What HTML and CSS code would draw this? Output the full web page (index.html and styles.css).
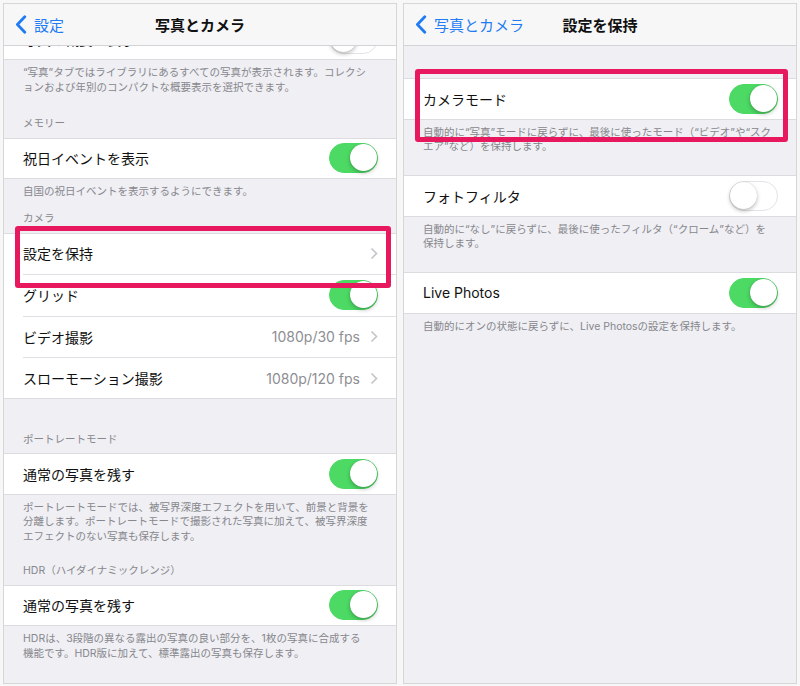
FILE: index.html
```html
<!DOCTYPE html>
<html lang="ja">
<head>
    <meta charset="UTF-8">
    <meta name="viewport" content="width=device-width, initial-scale=1.0">
    <title>写真とカメラ / 設定を保持</title>
    <link rel="stylesheet" href="styles.css">
</head>
<body>
<div class="page">

    <!-- left screen -->
    <div class="phone">
        <div class="navbar">
            <div class="back">
                <svg class="back_icon" viewBox="0 0 12 19" width="12" height="19"><path d="M9.8 1.8 L2.4 9.5 L9.8 17.2"/></svg>
                <span>設定</span>
            </div>
            <div class="title">写真とカメラ</div>
            <div></div>
        </div>
        <div class="content">
            <div class="list list_scrolled">
                <div class="group">
                    <div class="row">
                        <span class="label">写真の概要を表示</span>
                        <span class="toggle"></span>
                    </div>
                </div>
                <div class="foot">“写真”タブではライブラリにあるすべての写真が表示されます。コレクシ<br>ョンおよび年別のコンパクトな概要表示を選択できます。</div>

                <div class="head head_memory">メモリー</div>
                <div class="group">
                    <div class="row">
                        <span class="label">祝日イベントを表示</span>
                        <span class="toggle on"></span>
                    </div>
                </div>
                <div class="foot">自国の祝日イベントを表示するようにできます。</div>

                <div class="head head_camera">カメラ</div>
                <div class="group">
                    <div class="row">
                        <span class="label">設定を保持</span>
                        <svg class="chev" viewBox="0 0 8 13" width="8" height="13"><path d="M1.5 1.5 L6.5 6.5 L1.5 11.5"/></svg>
                    </div>
                    <div class="row">
                        <span class="label">グリッド</span>
                        <span class="toggle on"></span>
                    </div>
                    <div class="row">
                        <span class="label">ビデオ撮影</span>
                        <span class="value">1080p/30 fps</span>
                        <svg class="chev" viewBox="0 0 8 13" width="8" height="13"><path d="M1.5 1.5 L6.5 6.5 L1.5 11.5"/></svg>
                    </div>
                    <div class="row">
                        <span class="label">スローモーション撮影</span>
                        <span class="value">1080p/120 fps</span>
                        <svg class="chev" viewBox="0 0 8 13" width="8" height="13"><path d="M1.5 1.5 L6.5 6.5 L1.5 11.5"/></svg>
                    </div>
                </div>

                <div class="head head_portrait">ポートレートモード</div>
                <div class="group">
                    <div class="row">
                        <span class="label">通常の写真を残す</span>
                        <span class="toggle on"></span>
                    </div>
                </div>
                <div class="foot">ポートレートモードでは、被写界深度エフェクトを用いて、前景と背景を<br>分離します。ポートレートモードで撮影された写真に加えて、被写界深度<br>エフェクトのない写真も保存します。</div>

                <div class="head head_hdr">HDR（ハイダイナミックレンジ）</div>
                <div class="group">
                    <div class="row">
                        <span class="label">通常の写真を残す</span>
                        <span class="toggle on"></span>
                    </div>
                </div>
                <div class="foot">HDRは、3段階の異なる露出の写真の良い部分を、1枚の写真に合成する<br>機能です。HDR版に加えて、標準露出の写真も保存します。</div>
            </div>
        </div>
        <div class="mark mark_left"></div>
    </div>

    <!-- right screen -->
    <div class="phone">
        <div class="navbar">
            <div class="back">
                <svg class="back_icon" viewBox="0 0 12 19" width="12" height="19"><path d="M9.8 1.8 L2.4 9.5 L9.8 17.2"/></svg>
                <span>写真とカメラ</span>
            </div>
            <div class="title">設定を保持</div>
            <div></div>
        </div>
        <div class="content">
            <div class="list list_top">
                <div class="group">
                    <div class="row">
                        <span class="label">カメラモード</span>
                        <span class="toggle on"></span>
                    </div>
                </div>
                <div class="foot">自動的に“写真”モードに戻らずに、最後に使ったモード（“ビデオ”や“スク<br>エア”など）を保持します。</div>

                <div class="group">
                    <div class="row">
                        <span class="label">フォトフィルタ</span>
                        <span class="toggle"></span>
                    </div>
                </div>
                <div class="foot">自動的に“なし”に戻らずに、最後に使ったフィルタ（“クローム”など）を<br>保持します。</div>

                <div class="group">
                    <div class="row">
                        <span class="label">Live Photos</span>
                        <span class="toggle on"></span>
                    </div>
                </div>
                <div class="foot">自動的にオンの状態に戻らずに、Live Photosの設定を保持します。</div>
            </div>
        </div>
        <div class="mark mark_right"></div>
    </div>

</div>
</body>
</html>
```

FILE: styles.css
```css
body{
    margin: 0;
    background: #f7f7f7;
    font-family: Inter, "Noto Sans CJK JP", sans-serif;
    color: #111;
}

.page{
    display: flex;
    gap: 6px;
    padding: 3px;
}

.phone{
    position: relative;
    width: 392px;
    height: 679px;
    border: 1px solid #d6d6d9;
    background: #efeff4;
    display: flex;
    flex-direction: column;
    overflow: hidden;
}

/* nav bar */
.navbar{
    flex-shrink: 0;
    height: 41px;
    border-bottom: 1px solid #d3d3d7;
    background: #f7f7f8;
    display: grid;
    grid-template-columns: 1fr auto 1fr;
    align-items: center;
}
.back{
    display: flex;
    align-items: center;
    gap: 7px;
    padding-left: 11px;
    color: #1f7cf2;
    font-size: 15px;
    white-space: nowrap;
}
.back_icon path{
    fill: none;
    stroke: #1f7cf2;
    stroke-width: 2.8;
    stroke-linecap: round;
    stroke-linejoin: round;
}
.title{
    font-size: 15px;
    font-weight: 700;
    color: #111;
}

/* scroll area */
.content{
    flex: 1;
    overflow: hidden;
}
.list_scrolled{
    margin-top: -27.5px;
}
.list_top{
    margin-top: 32px;
}

.group{
    background: #fff;
    box-shadow: inset 0 1px #dcdce0, inset 0 -1px #dcdce0;
}
.foot + .group{
    margin-top: 20.5px;
}
.row{
    box-sizing: border-box;
    height: 41.5px;
    margin-left: 19px;
    padding-right: 18px;
    display: flex;
    align-items: center;
    font-size: 14px;
}
.row + .row{
    border-top: 1px solid #e0e0e4;
}
.label{
    flex: 1;
    white-space: nowrap;
}
.value{
    color: #8e8e93;
    margin-right: 10px;
}
.chev path{
    fill: none;
    stroke: #c4c4c9;
    stroke-width: 1.6;
}

.head, .foot{
    padding-left: 19px;
    font-size: 10.5px;
    line-height: 14.5px;
    color: #87878c;
    white-space: nowrap;
}
.head{
    padding-bottom: 6px;
}
.foot{
    padding-top: 6px;
}
.head_memory{
    margin-top: 22px;
}
.head_camera{
    margin-top: 12.5px;
}
.head_portrait{
    margin-top: 34px;
}
.head_hdr{
    margin-top: 20px;
}

/* switches */
.toggle{
    position: relative;
    box-sizing: border-box;
    width: 49px;
    height: 30px;
    border-radius: 15px;
    background: #fff;
    border: 1.5px solid #e3e3e8;
}
.toggle::after{
    content: "";
    position: absolute;
    top: 0;
    left: 0;
    width: 27px;
    height: 27px;
    border-radius: 50%;
    background: #fff;
    box-shadow: 0 2px 4px rgba(0,0,0,0.25), 0 0 1px rgba(0,0,0,0.2);
}
.toggle.on{
    background: #4cd964;
    border-color: #4cd964;
}
.toggle.on::after{
    left: auto;
    right: 0;
}

/* pink highlight boxes drawn over the screenshot */
.mark{
    position: absolute;
    box-sizing: border-box;
    border: 5px solid #e8185e;
    border-radius: 3px;
}
.mark_left{
    left: 11px;
    top: 222px;
    width: 376px;
    height: 62px;
}
.mark_right{
    left: 11px;
    top: 65px;
    width: 373px;
    height: 73px;
}
```
